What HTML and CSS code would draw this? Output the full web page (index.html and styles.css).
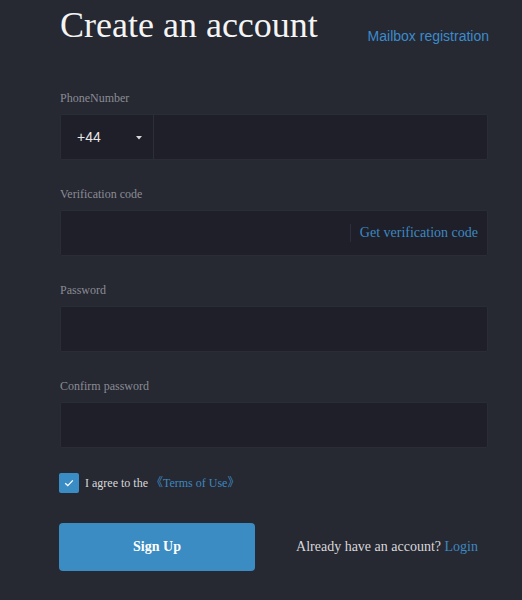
FILE: index.html
```html
<!DOCTYPE html>
<html>
<head>
<meta charset="utf-8">
<link rel="stylesheet" href="styles.css">
</head>
<body>
<div class="page">
  <div class="header">
    <h1 class="title">Create an account</h1>
    <a class="mail-link">Mailbox registration</a>
  </div>

  <div class="field first">
    <div class="label">PhoneNumber</div>
    <div class="box">
      <div class="country">
        <span class="code">+44</span>
        <svg class="caret" width="6" height="4" viewBox="0 0 6 4"><polygon points="0,0 6,0 3,3.5" fill="#d8d8d8"/></svg>
      </div>
      <div class="input"></div>
    </div>
  </div>

  <div class="field">
    <div class="label">Verification code</div>
    <div class="box">
      <div class="input"></div>
      <div class="getcode">Get verification code</div>
    </div>
  </div>

  <div class="field">
    <div class="label">Password</div>
    <div class="box"></div>
  </div>

  <div class="field">
    <div class="label">Confirm password</div>
    <div class="box"></div>
  </div>

  <div class="agree">
    <span class="check">
      <svg width="10" height="8" viewBox="0 0 10 8"><polyline points="1.2,4.2 3.8,6.6 8.8,1.4" fill="none" stroke="#ffffff" stroke-width="1.3"/></svg>
    </span>
    <span class="agree-text">I agree to the <span class="terms">《Terms of Use》</span></span>
  </div>

  <div class="actions">
    <button class="signup">Sign Up</button>
    <div class="already">Already have an account? <a class="login">Login</a></div>
  </div>
</div>
</body>
</html>
```

FILE: styles.css
```css
html, body {
  margin: 0;
  padding: 0;
  background: #262832;
}
body {
  font-family: "Liberation Serif", "Times New Roman", serif;
  color: #d6d6d8;
  width: 522px;
  height: 600px;
  overflow: hidden;
}
.page {
  width: 428px;
  padding-left: 60px;
}
.header {
  display: flex;
  justify-content: space-between;
  align-items: flex-start;
  height: 45px;
}
.title {
  margin: 5px 0 0 0;
  font-size: 36px;
  line-height: 40px;
  font-weight: normal;
  color: #f4f4f4;
}
.mail-link {
  margin-top: 28px;
  font-family: "Liberation Sans", Arial, sans-serif;
  font-size: 14px;
  line-height: 16px;
  color: #3b8ccc;
  margin-right: -1px;
}
.field {
  margin-bottom: 26px;
}
.field.first {
  margin-top: 45px;
}
.label {
  font-size: 12px;
  line-height: 16px;
  color: #8a8c94;
  margin-bottom: 8px;
}
.box {
  box-sizing: border-box;
  height: 46px;
  background: #1e1f29;
  border: 1px solid #2a2c37;
  border-radius: 2px;
  display: flex;
  align-items: center;
}
.country {
  box-sizing: border-box;
  width: 93px;
  height: 100%;
  border-right: 1px solid #2c2e39;
  display: flex;
  align-items: center;
  padding-left: 16px;
  padding-right: 11px;
  justify-content: space-between;
}
.code {
  font-family: "Liberation Sans", Arial, sans-serif;
  font-size: 14px;
  color: #e8e8e8;
}
.caret {
  display: block;
  margin-top: 1px;
}
.input {
  flex: 1;
  height: 100%;
}
.getcode {
  border-left: 1px solid #2c2e39;
  height: 18px;
  line-height: 18px;
  padding-left: 9px;
  padding-right: 9px;
  font-size: 14px;
  color: #3d89c0;
}
.agree {
  margin-top: -1px;
  display: flex;
  align-items: center;
  height: 20px;
  margin-left: -1px;
}
.check {
  box-sizing: border-box;
  width: 20px;
  height: 20px;
  background: #3a8cc4;
  border-radius: 2px;
  display: flex;
  align-items: center;
  justify-content: center;
  margin-right: 6px;
}
.check svg {
  display: block;
}
.agree-text {
  font-size: 12px;
  line-height: 16px;
  color: #d8d8da;
}
.terms {
  color: #3d89c0;
  font-family: "Liberation Serif", "Noto Sans CJK SC", serif;
}
.actions {
  margin-top: 30px;
  display: flex;
  align-items: center;
  justify-content: space-between;
  margin-left: -1px;
}
.signup {
  width: 196px;
  height: 48px;
  border: none;
  border-radius: 4px;
  background: #3a8cc2;
  color: #ffffff;
  font-family: "Liberation Serif", "Times New Roman", serif;
  font-weight: bold;
  font-size: 14px;
  padding: 0;
}
.already {
  font-size: 14px;
  color: #d8d8da;
  margin-right: 10px;
}
.login {
  color: #3d89c0;
}
```
